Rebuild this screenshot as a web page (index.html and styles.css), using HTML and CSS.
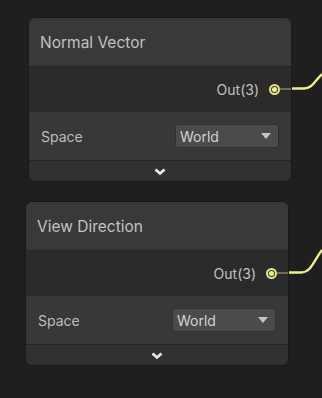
FILE: index.html
```html
<!DOCTYPE html>
<html lang="en">
<head>
    <meta charset="UTF-8">
    <meta name="viewport" content="width=device-width, initial-scale=1.0">
    <title>Shader Graph Nodes</title>
    <link rel="stylesheet" href="styles.css">
</head>
<body>
    <div class="canvas">
        <!-- wires -->
        <svg class="wires" width="322" height="398" viewBox="0 0 322 398">
            <path class="wire-out" d="M289 88.5 L304 88.5 C312 88.5 314 82 322 74"/>
            <path class="wire-out" d="M286 272.5 L301 272.5 C311 272.5 313 262 322 250"/>
        </svg>

        <!-- node 1 -->
        <section class="node node-normal">
            <h2 class="title">Normal Vector</h2>
            <div class="outputs">
                <span class="port-label">Out(3)</span>
                <span class="port"><span class="port-dot"></span></span>
                <span class="port-wire"></span>
            </div>
            <div class="controls">
                <span class="ctl-label">Space</span>
                <button type="button" class="dropdown">World<span class="caret"></span></button>
            </div>
            <div class="collapse">
                <svg width="12" height="8" viewBox="0 0 12 8"><path d="M1.5 1.5 L6 5.5 L10.5 1.5" fill="none" stroke="#e8e8e8" stroke-width="2.8"/></svg>
            </div>
        </section>

        <!-- node 2 -->
        <section class="node node-view">
            <h2 class="title">View Direction</h2>
            <div class="outputs">
                <span class="port-label">Out(3)</span>
                <span class="port"><span class="port-dot"></span></span>
                <span class="port-wire"></span>
            </div>
            <div class="controls">
                <span class="ctl-label">Space</span>
                <button type="button" class="dropdown">World<span class="caret"></span></button>
            </div>
            <div class="collapse">
                <svg width="12" height="8" viewBox="0 0 12 8"><path d="M1.5 1.5 L6 5.5 L10.5 1.5" fill="none" stroke="#e8e8e8" stroke-width="2.8"/></svg>
            </div>
        </section>
    </div>
</body>
</html>
```

FILE: styles.css
```css
* {margin:0;padding:0;box-sizing:border-box;}
body {background:#1f1f1f;font-family:Inter, "Noto Sans", sans-serif;}
.canvas {position:relative;width:322px;height:398px;overflow:hidden;}

.wires {position:absolute;left:0;top:0;}
.wire-out {fill:none;stroke:#eeee8c;stroke-width:2.4;}

/* nodes sit on a free canvas */
.node {position:absolute;width:262px;border-radius:6px;overflow:hidden;
       background:#2c2c2c;box-shadow:0 0 0 1px #1a1a1a;}
.node-normal {left:29px;top:18px;}
.node-view {left:26px;top:202px;}

.title {height:49px;background:#393939;border-bottom:1px solid #242424;
        font-size:15.5px;font-weight:400;color:#c2c2c2;
        display:flex;align-items:center;padding-left:11px;}

.outputs {height:44px;background:#2b2b2b;display:flex;align-items:center;
          justify-content:flex-end;padding-right:11px;gap:10px;position:relative;}
.port-label {font-size:14px;color:#c2c2c2;}
.port {width:11px;height:11px;border-radius:50%;border:2px solid #e4e48a;
       background:#3d3d2e;display:flex;align-items:center;justify-content:center;
       position:relative;z-index:1;}
.port-dot {width:5px;height:5px;border-radius:50%;background:#eeee8c;}
.port-wire {position:absolute;right:0;top:calc(50% - 1px);width:11px;height:2px;background:#6e6e48;}

.controls {height:49px;background:#383838;border-top:1px solid #2a2a2a;
           display:flex;align-items:center;justify-content:space-between;
           padding:0 12px 0 12px;}
.ctl-label {font-size:14px;color:#bebebe;}
.dropdown {width:104px;height:24px;background:#4b4b4b;border:1px solid #2f2f2f;
           border-radius:3px;font-family:inherit;font-size:14px;color:#d4d4d4;
           display:flex;align-items:center;justify-content:space-between;
           padding:0 7px 0 4px;text-align:left;}
.caret {width:0;height:0;border-left:5px solid transparent;border-right:5px solid transparent;
        border-top:6px solid #c4c4c4;}

.collapse {height:21px;background:#313131;border-top:1px solid #232323;
           display:flex;align-items:center;justify-content:center;padding-top:1px;}
```
